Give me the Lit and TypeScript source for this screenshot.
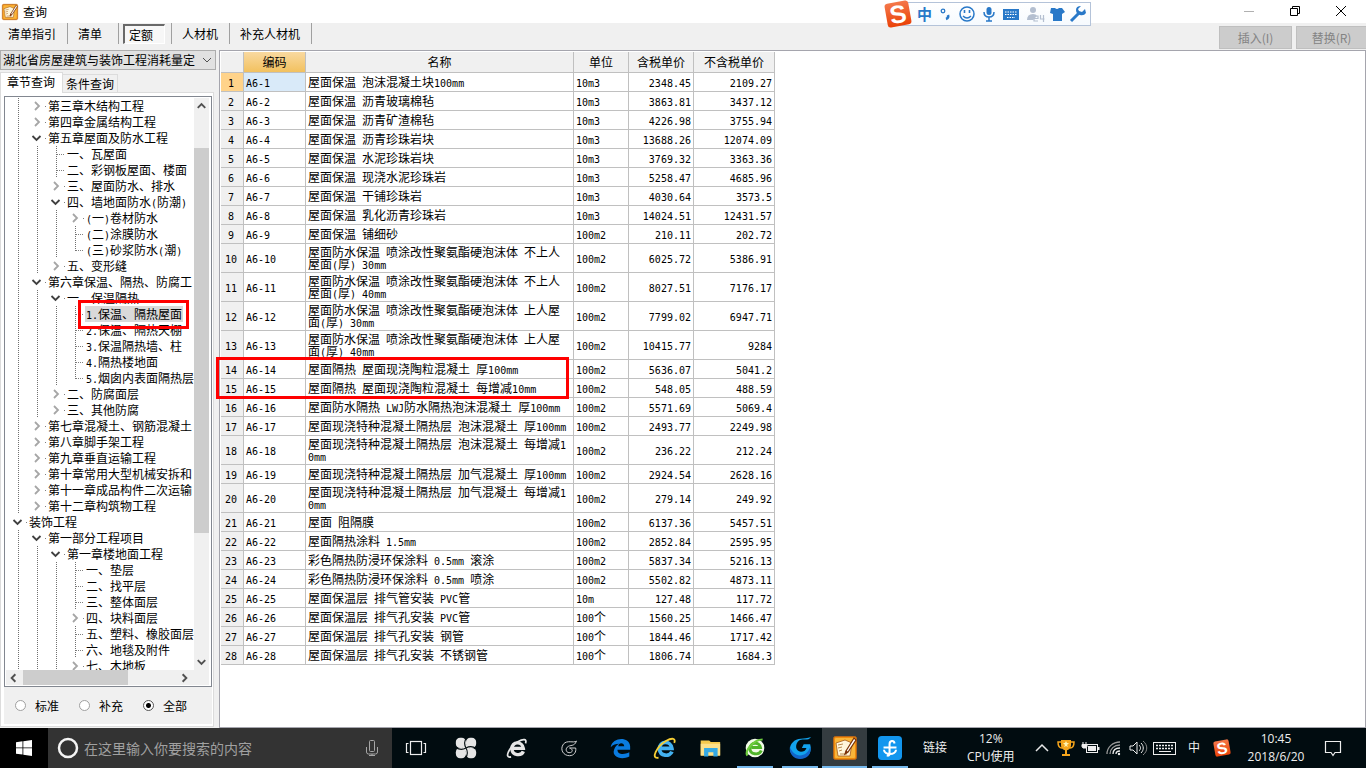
import { LitElement, html, svg, css, nothing } from "lit";
import { customElement, property, state } from "lit/decorators.js";
import { classMap } from "lit/directives/class-map.js";

type Kind = "open" | "closed" | "leaf" | "last";
interface Node { level: number; kind: Kind; text: string; selected?: boolean }

const n = (level: number, kind: Kind, text: string, selected = false): Node => ({ level, kind, text, selected });

const TREE: Node[] = [
  n(1, "closed", "第三章木结构工程"),
  n(1, "closed", "第四章金属结构工程"),
  n(1, "open", "第五章屋面及防水工程"),
  n(2, "leaf", "一、瓦屋面"),
  n(2, "leaf", "二、彩钢板屋面、楼面"),
  n(2, "closed", "三、屋面防水、排水"),
  n(2, "open", "四、墙地面防水(防潮)"),
  n(3, "closed", "(一)卷材防水"),
  n(3, "leaf", "(二)涂膜防水"),
  n(3, "last", "(三)砂浆防水(潮)"),
  n(2, "closed", "五、变形缝"),
  n(1, "open", "第六章保温、隔热、防腐工"),
  n(2, "open", "一、保温隔热"),
  n(3, "leaf", "1.保温、隔热屋面", true),
  n(3, "leaf", "2.保温、隔热天棚"),
  n(3, "leaf", "3.保温隔热墙、柱"),
  n(3, "leaf", "4.隔热楼地面"),
  n(3, "last", "5.烟囱内表面隔热层"),
  n(2, "closed", "二、防腐面层"),
  n(2, "closed", "三、其他防腐"),
  n(1, "closed", "第七章混凝土、钢筋混凝土"),
  n(1, "closed", "第八章脚手架工程"),
  n(1, "closed", "第九章垂直运输工程"),
  n(1, "closed", "第十章常用大型机械安拆和"),
  n(1, "closed", "第十一章成品构件二次运输"),
  n(1, "closed", "第十二章构筑物工程"),
  n(0, "open", "装饰工程"),
  n(1, "open", "第一部分工程项目"),
  n(2, "open", "第一章楼地面工程"),
  n(3, "leaf", "一、垫层"),
  n(3, "leaf", "二、找平层"),
  n(3, "leaf", "三、整体面层"),
  n(3, "closed", "四、块料面层"),
  n(3, "leaf", "五、塑料、橡胶面层"),
  n(3, "leaf", "六、地毯及附件"),
  n(3, "closed", "七、木地板"),
];

const ROWS: [string, string, string, string][] = [
  ["屋面保温 泡沫混凝土块100mm", "10m3", "2348.45", "2109.27"],
  ["屋面保温 沥青玻璃棉毡", "10m3", "3863.81", "3437.12"],
  ["屋面保温 沥青矿渣棉毡", "10m3", "4226.98", "3755.94"],
  ["屋面保温 沥青珍珠岩块", "10m3", "13688.26", "12074.09"],
  ["屋面保温 水泥珍珠岩块", "10m3", "3769.32", "3363.36"],
  ["屋面保温 现浇水泥珍珠岩", "10m3", "5258.47", "4685.96"],
  ["屋面保温 干铺珍珠岩", "10m3", "4030.64", "3573.5"],
  ["屋面保温 乳化沥青珍珠岩", "10m3", "14024.51", "12431.57"],
  ["屋面保温 铺细砂", "100m2", "210.11", "202.72"],
  ["屋面防水保温 喷涂改性聚氨酯硬泡沫体 不上人屋面(厚) 30mm", "100m2", "6025.72", "5386.91"],
  ["屋面防水保温 喷涂改性聚氨酯硬泡沫体 不上人屋面(厚) 40mm", "100m2", "8027.51", "7176.17"],
  ["屋面防水保温 喷涂改性聚氨酯硬泡沫体 上人屋面(厚) 30mm", "100m2", "7799.02", "6947.71"],
  ["屋面防水保温 喷涂改性聚氨酯硬泡沫体 上人屋面(厚) 40mm", "100m2", "10415.77", "9284"],
  ["屋面隔热 屋面现浇陶粒混凝土 厚100mm", "100m2", "5636.07", "5041.2"],
  ["屋面隔热 屋面现浇陶粒混凝土 每增减10mm", "100m2", "548.05", "488.59"],
  ["屋面防水隔热 LWJ防水隔热泡沫混凝土 厚100mm", "100m2", "5571.69", "5069.4"],
  ["屋面现浇特种混凝土隔热层 泡沫混凝土 厚100mm", "100m2", "2493.77", "2249.98"],
  ["屋面现浇特种混凝土隔热层 泡沫混凝土 每增减10mm", "100m2", "236.22", "212.24"],
  ["屋面现浇特种混凝土隔热层 加气混凝土 厚100mm", "100m2", "2924.54", "2628.16"],
  ["屋面现浇特种混凝土隔热层 加气混凝土 每增减10mm", "100m2", "279.14", "249.92"],
  ["屋面 阻隔膜", "100m2", "6137.36", "5457.51"],
  ["屋面隔热涂料 1.5mm", "100m2", "2852.84", "2595.95"],
  ["彩色隔热防浸环保涂料 0.5mm 滚涂", "100m2", "5837.34", "5216.13"],
  ["彩色隔热防浸环保涂料 0.5mm 喷涂", "100m2", "5502.82", "4873.11"],
  ["屋面保温层 排气管安装 PVC管", "10m", "127.48", "117.72"],
  ["屋面保温层 排气孔安装 PVC管", "100个", "1560.25", "1466.47"],
  ["屋面保温层 排气孔安装 钢管", "100个", "1844.46", "1717.42"],
  ["屋面保温层 排气孔安装 不锈钢管", "100个", "1806.74", "1684.3"],
];

/** Half-width runs are set in a monospace face half as wide as the ideographs. */
const mixed = (text: string) =>
  text.split(/([\x20-\x7e]+)/).filter(Boolean).map((run) =>
    /^[\x20-\x7e]/.test(run) ? html`<span class="half">${run}</span>` : run);

const shared = css`
  * { box-sizing: border-box; }
  button, select, input { font: inherit; color: inherit; margin: 0; padding: 0; border: 0; background: none; border-radius: 0; }
  svg { display: block; flex: none; overflow: visible; }
  .half { font-family: "DejaVu Sans Mono", monospace; font-size: 10px; line-height: 0; }
`;

const noteIcon = (size: number) => html`
  <svg width=${size} height=${size} viewBox="0 0 24 24" aria-hidden="true">
    <rect x="0.5" y="0.5" width="23" height="23" rx="2" fill="#f08a0c" stroke="#b5651a"/>
    <rect x="2" y="2" width="20" height="20" rx="1" fill="#f9b53a"/>
    <path d="M3 7l9-3 7 3-2 13-12 0z" fill="#fff6dc" stroke="#a35a1c" stroke-width=".8"/>
    <path d="M5 9l5-1M5 12l4-1M6 15l3-1M7 18l7 0" stroke="#b98a50" stroke-width="1"/>
    <path d="M21 2l-8 13-1 3 3-2 8-12z" fill="#fff" stroke="#7a3408" stroke-width="1.2"/>
    <path d="M13 14l-1 4 3-2z" fill="#7a2c0a"/>
  </svg>`;

const sogou = (size: number) => html`
  <svg width=${size} height=${size} viewBox="0 0 28 28" aria-label="搜狗">
    <defs><linearGradient id="sg" x1="0" y1="0" x2="0" y2="1"><stop offset="0" stop-color="#f4784a"/><stop offset="1" stop-color="#ea4208"/></linearGradient></defs>
    <g transform="rotate(-10 14 14)">
      <rect x="2" y="2" width="24" height="24" rx="3" fill="url(#sg)"/>
      <text x="14" y="23" text-anchor="middle" font-family="Liberation Sans, sans-serif" font-weight="700" font-size="25" fill="#fff">S</text>
    </g>
  </svg>`;

const guide = (kind: Kind | "line") => {
  const stub = kind === "leaf" || kind === "last";
  return html`<svg width="19" height="16" viewBox="0 0 19 16" shape-rendering=${kind === "open" || kind === "closed" ? "auto" : "crispEdges"}>
    ${kind === "line" || stub ? svg`<path d="M9.5 0V${kind === "last" ? 9 : 16}" stroke="#707070" stroke-dasharray="1 1"/>` : nothing}
    ${stub ? svg`<path d="M10 8.5H18" stroke="#808080" stroke-dasharray="1 1"/>` : nothing}
    ${kind === "open" ? svg`<path d="M4.500 6l4 4 4-4" fill="none" stroke="#404040" stroke-width="1.800"/>` : nothing}
    ${kind === "closed" ? svg`<path d="M7 4l4 4-4 4" fill="none" stroke="#a6a6a6" stroke-width="1.800"/>` : nothing}
    ${kind === "open" || kind === "closed" ? svg`<rect x="17" y="8" width="1" height="1" fill="#808080"/>` : nothing}
  </svg>`;
};

const arrow = (dir: "up" | "down" | "left" | "right") => {
  const d = { up: "M4 10l4-4 4 4", down: "M4 6l4 4 4-4", left: "M10 4L6 8l4 4", right: "M6 4l4 4-4 4" }[dir];
  return html`<svg width="15" height="16" viewBox="0 0 16 16"><path d=${d} fill="none" stroke="#505050" stroke-width="2"/></svg>`;
};

@customElement("chapter-tree")
class ChapterTree extends LitElement {
  static styles = [shared, css`
    :host { display: grid; grid-template: minmax(0, 1fr) 15px / minmax(0, 1fr) 15px; padding: 1px 2px 1px 1px; background: #fff; border: 1px solid #828790; overflow: hidden; }
    .view { overflow: hidden; padding-left: 3px; }
    .row { display: flex; height: 16px; line-height: 16px; white-space: nowrap; }
    .label { padding: 0 1px; }
    .selected { background: #d9d9d9; }
    .bar { display: flex; background: #f0f0f0; }
    .vertical { flex-direction: column; }
    .horizontal { padding: 0 2px 0 0; }
    .thumb { background: #cdcdcd; }
    .before { flex: 34; }
    .vertical .thumb { flex: 383; }
    .after { flex: 121; }
    .horizontal .thumb { flex: 105; margin-left: 2px; }
    .rest { flex: 49; }
    .corner { background: #f0f0f0; }
  `];
  render() {
    return html`
      <div class="view" role="tree" aria-label="章节">
        ${TREE.map((node) => html`
          <div class="row" role="treeitem" aria-level=${node.level + 1} aria-selected=${node.selected ? "true" : "false"}>
            ${Array.from({ length: node.level }, () => guide("line"))}${guide(node.kind)}
            <span class=${classMap({ label: true, selected: !!node.selected })}>${mixed(node.text)}</span>
          </div>`)}
      </div>
      <div class="bar vertical">${arrow("up")}<i class="before"></i><i class="thumb"></i><i class="after"></i>${arrow("down")}</div>
      <div class="bar horizontal">${arrow("left")}<i class="thumb"></i><i class="rest"></i>${arrow("right")}</div>
      <div class="corner"></div>`;
  }
}

@customElement("quota-table")
class QuotaTable extends LitElement {
  static styles = [shared, css`
    :host { display: block; }
    table { table-layout: fixed; width: 554px; border-collapse: separate; border-spacing: 0; line-height: 12px; }
    th, td { font-weight: 400; padding: 2px 2px; border: solid #c0c0c0; border-width: 0 1px 1px 0; height: 19px; text-align: left; word-break: break-all; }
    th { background: #f0f0f0; text-align: center; }
    tbody th { padding-right: 4px; }
    thead th { height: 21px; }
    .name { padding-right: 4px; }
    .num { text-align: right; }
    .sorted { background: linear-gradient(#f9d9a0, #f2c15f); }
    .current { background: #ffd38a; }
    .picked { background: #d9eaf9; }
    .c0 { width: 23px; } .c1 { width: 62px; } .c2 { width: 268px; } .c3 { width: 55px; } .c4 { width: 65px; } .c5 { width: 81px; }
  `];
  render() {
    return html`<table>
      <colgroup>${[0, 1, 2, 3, 4, 5].map((i) => html`<col class="c${i}">`)}</colgroup>
      <thead><tr><th></th><th class="sorted" scope="col">编码</th><th scope="col">名称</th><th scope="col">单位</th><th scope="col">含税单价</th><th scope="col">不含税单价</th></tr></thead>
      <tbody>${ROWS.map(([name, unit, taxed, net], i) => html`<tr>
        <th scope="row" class=${classMap({ current: i === 0 })}>${mixed(String(i + 1))}</th>
        <td class=${classMap({ picked: i === 0 })}>${mixed(`A6-${i + 1}`)}</td>
        <td class="name">${mixed(name)}</td><td>${mixed(unit)}</td>
        <td class="num">${mixed(taxed)}</td><td class="num">${mixed(net)}</td></tr>`)}
      </tbody></table>`;
  }
}

const eShape = (color: string, ring: string) => svg`
  <path d="M20.500 17C18.500 22.500 7.500 22.500 7 14 6.500 5 19.500 4.500 20.500 13.500H8" fill="none" stroke=${color} stroke-width="4"/>
  <path d="M6 23.500c-9 2-2-12 8-18 7-4 11-3 9 2" fill="none" stroke=${ring} stroke-width="2"/>`;

const APPS = {
  pinwheel: svg`<g fill="#e6e6e6"><rect x="1" y="1" width="12" height="12" rx="5"/><rect x="13" y="1" width="12" height="12" rx="5"/><rect x="1" y="13" width="12" height="12" rx="5"/><rect x="13" y="13" width="12" height="12" rx="5"/><rect x="9" y="9" width="8" height="8"/></g><path d="M1 12.500q6 4 12 .5t12 .5M13.500 1q-4 6-.5 12t-.5 12" fill="none" stroke="#061013" stroke-width="1.300"/>`,
  e: eShape("#e6e6e6", "#e6e6e6"),
  swirl: svg`<path d="M24 4c-4 3-12-2-17 4-5 7 0 15 8 15 6 0 9-5 8-10h-8c4 1 5 5 1 6-5 1-7-4-4-7 4-4 9 0 12-8z" fill="none" stroke="#d0d0d0" stroke-width="1.300"/>`,
  edge: svg`<path d="M2 12C4 0 24-1 25 11v4H10c0 6 8 6 14 3v5C14 28 3 23 6 15c1-4 4-6 6-7-4 0-7 1-10 4zm9-1h7c0-5-7-5-7 0z" fill="#0a7be0"/>`,
  ie: eShape("#43b2f1", "#f7cf35"),
  folder: svg`<path d="M2 4h10l2 2h11v16H2z" fill="#f6c94e"/><path d="M2 8h23v14H2z" fill="#fde08a"/><path d="M6 13h16v10h-5v-5h-6v5H6z" fill="#35a9e4"/>`,
  green: svg`<circle cx="13" cy="13" r="11" fill="#f2fbe8"/><path d="M20.500 16C18 22 7 21 7 13.500 7 6 18.500 5 19.500 12.500H9" fill="none" stroke="#50b52a" stroke-width="3.500"/><path d="M4 22c-4-6 8-19 18-19" fill="none" stroke="#6fce3f" stroke-width="2.500"/>`,
  blue: svg`<path d="M25 1c-3 5-9 1-13 4-5 4-4 12 2 12 3 0 5-1 6-4h-5l2-4h7c3 10-4 16-12 15C3 23-1 13 5 7c5-6 12-3 20-6z" fill="#12a2ed"/><path d="M2 12c-1 8 5 13 11 13 8 0 13-6 11-13-2 6-6 9-11 9-5 0-9-4-11-9z" fill="#1264ca"/>`,
  harbor: svg`<rect x="0" y="0" width="26" height="26" rx="4" fill="#1296ee"/><path d="M18 8C17 4 12.500 5 12.500 9v10q0 3-3 2M6 12.500h14M6.500 15c0 6 13 6 13 0" fill="none" stroke="#fff" stroke-width="2.200"/>`,
};

const TRAY = {
  up: svg`<path d="M6 15l6-6 6 6" fill="none" stroke="#e8e8e8" stroke-width="1.500"/>`,
  cup: svg`<path d="M7 4h10v5c0 7-10 7-10 0zM11 14h2v4h-2zM8 18h8v2H8z" fill="#f6a51c"/><path d="M7 6H4c0 5 2 6 4 6M17 6h3c0 5-2 6-4 6" fill="none" stroke="#f6a51c" stroke-width="1.500"/><path d="M12 5l1 2h2l-2 2 1 2-2-1-2 1 1-2-2-2h2z" fill="#fff3b0"/>`,
  power: svg`<rect x="8.500" y="8.500" width="11" height="8" fill="none" stroke="#eee"/><rect x="10" y="10" width="8" height="5" fill="#eee"/><rect x="20" y="11" width="1.500" height="3" fill="#eee"/><path d="M5 6v2M8 6v2M4 8.500h5v2l-1 1.500H5l-1-1.500z" fill="#eee" stroke="#eee"/>`,
  wifi: svg`<g fill="none" stroke="#9a9a9a" stroke-width="1.300"><path d="M5 18C5 11 11 6 18 6M8 18c0-5 4-9 10-9"/><path d="M11 18c0-4 3-6 7-6M14 18c0-2 2-3 4-3" stroke="#eee"/></g><circle cx="17" cy="18" r="1.200" fill="#eee"/>`,
  sound: svg`<path d="M4 10h3l4-4v12l-4-4H4z" fill="none" stroke="#eee"/><path d="M13 9c2 2 2 4 0 6M15 7c3 3 3 7 0 10" fill="none" stroke="#eee"/><path d="M17 5c5 4 5 10 0 14" fill="none" stroke="#888"/>`,
  keys: svg`<rect x=".5" y="6.500" width="22" height="12" fill="none" stroke="#eee"/><path d="M3 9.500h18M3 12.500h18" stroke="#eee" stroke-width="1.500" stroke-dasharray="2 1"/><path d="M6 15.500h12" stroke="#eee"/>`,
};

@customElement("task-bar")
class TaskBar extends LitElement {
  static styles = [shared, css`
    :host { display: flex; height: 40px; flex: none; background: #010c10; color: #eee; font: 12px/18px "Open Sans", "Noto Sans CJK SC", sans-serif; }
    button { display: grid; place-items: center; height: 40px; }
    .start { width: 48px; background: #000; }
    .search { display: flex; align-items: center; width: 344px; padding: 0 12px 0 9px; gap: 5px; background: #333; }
    input { flex: 1; min-width: 0; outline: 0; font: 14px/20px "Noto Sans CJK SC", sans-serif; }
    input::placeholder { color: #a0a0a0; opacity: 1; }
    .view { width: 48px; }
    .pinned, .apps { display: flex; }
    .pinned button { width: 51px; }
    .apps { padding-left: 4px; }
    .apps button { width: 45px; }
    .apps .running { background: linear-gradient(#76b9ed, #76b9ed) bottom / 36px 2px no-repeat; }
    .apps .active { background: linear-gradient(#76b9ed, #76b9ed) bottom / 100% 2px no-repeat #343c40; }
    .links { padding-left: 11px; align-self: center; }
    .cpu { padding-left: 20px; text-align: center; align-self: center; }
    .tray { display: flex; margin-left: auto; align-items: center; padding-right: 16px; }
    .tray button { width: 24px; }
    .tray .wide { width: 30px; }
    .tray .mid { width: 28px; }
    .clock { width: 80px; text-align: center; }
    .tray .notes { width: 34px; }
  `];
  private tray(label: string, shape: unknown, cls = "") {
    return html`<button class=${cls} aria-label=${label}><svg width="24" height="24" viewBox="0 0 24 24">${shape}</svg></button>`;
  }
  private app(label: string, shape: unknown, cls = "", size = 22) {
    return html`<button class=${cls} aria-label=${label}><svg width=${size} height=${size} viewBox="0 0 26 26">${shape}</svg></button>`;
  }
  render() {
    return html`
      <button class="start" aria-label="开始"><svg width="16" height="16" viewBox="0 0 16 16" fill="#fff"><path d="M0 2.300L6.500 1.300V7.500H0zM7.300 1.200L16 0V7.500H7.300zM0 8.300H6.500V14.600L0 13.700zM7.300 8.300H16V16L7.300 14.800z"/></svg></button>
      <label class="search">
        <svg width="22" height="22" viewBox="0 0 22 22"><circle cx="11" cy="11" r="9" fill="none" stroke="#f4f4f4" stroke-width="2.500"/></svg>
        <input type="text" aria-label="搜索" placeholder="在这里输入你要搜索的内容">
        <svg width="16" height="18" viewBox="0 0 16 18" fill="none" stroke="#a6a6a6"><rect x="5.500" y="1.500" width="5" height="11" rx="1"/><path d="M2.500 8v5q0 2 2 2h7q2 0 2-2V8M8 15v2M5 16.500h6"/></svg>
      </label>
      <button class="view" aria-label="任务视图"><svg width="22" height="16" viewBox="0 0 22 16" fill="none" stroke="#eee" stroke-width="1.200"><rect x="5.500" y="1.500" width="11" height="13"/><path d="M3.500 3.500h-2v9h2M18.500 3.500h2v9h-2"/></svg></button>
      <div class="pinned">${this.app("浏览助手", APPS.pinwheel)}${this.app("浏览器", APPS.e)}${this.app("广联达", APPS.swirl, "", 20)}</div>
      <div class="apps">
        ${this.app("Edge", APPS.edge)}${this.app("Internet Explorer", APPS.ie, "", 24)}${this.app("文件资源管理器", APPS.folder)}
        ${this.app("安全浏览器", APPS.green, "running")}${this.app("广联达", APPS.blue, "running", 24)}
        <button class="running active" aria-label="查询">${noteIcon(24)}</button>
        ${this.app("驻场", APPS.harbor, "running", 24)}
      </div>
      <span class="links">链接</span>
      <span class="cpu">12%<br>CPU使用</span>
      <div class="tray">
        ${this.tray("更多", TRAY.up)}${this.tray("奖杯", TRAY.cup)}${this.tray("电源", TRAY.power)}${this.tray("网络", TRAY.wifi)}${this.tray("音量", TRAY.sound)}${this.tray("键盘", TRAY.keys, "wide")}
        <button class="mid">中</button><button class="mid" aria-label="输入法">${sogou(18)}</button>
        <time class="clock">10:45<br>2018/6/20</time>
        <button class="notes" aria-label="通知"><svg width="18" height="18" viewBox="0 0 18 18"><path d="M1.500 2.500h15v11H11l-2 3-2-3H1.500z" fill="none" stroke="#eee" stroke-width="1.200"/></svg></button>
      </div>`;
  }
}

@customElement("app-root")
class AppRoot extends LitElement {
  static styles = [shared, css`
    :host { display: flex; flex-direction: column; height: 100vh; position: relative; overflow: hidden; background: #f0f0f0; color: #000; font: 12px/16px "Noto Sans CJK SC", sans-serif; }
    .title { display: flex; align-items: center; height: 23px; flex: none; padding: 0 2px; background: #fff; }
    .title h1 { flex: 1; margin: 0 0 0 5px; font-size: 12px; font-weight: 400; }
    .control { display: grid; place-items: center; width: 46px; height: 21px; margin-bottom: 2px; }
    .tools { display: flex; height: 27px; flex: none; }
    .tool { padding: 0 11px 0 10px; border-right: 1px solid #a0a0a0; height: 21px; }
    .tool:first-child { padding-left: 8px; }
    .tool.second { padding-right: 16px; }
    .holder { padding: 1px 6px 0 4px; border-right: 1px solid #a0a0a0; height: 21px; }
    .pressed { width: 42px; height: 20px; padding: 0 0 0 4px; text-align: left; background: #f7f7f7; border: solid; border-width: 2px 1px 1px 2px; border-color: #696969 #fff #fff #696969; }
    .actions { display: flex; gap: 4px; margin: 3px 0 0 auto; }
    .actions button { width: 73px; height: 23px; background: #ccc; border: 1px solid #bfbfbf; color: #838383; }
    .actions button:last-child { width: 70px; border-right: 0; }
    .body { display: flex; flex: 1; min-height: 0; gap: 3px; }
    aside { display: flex; flex-direction: column; width: 216px; flex: none; }
    .combo { display: grid; grid-template: 20px / 1fr; align-items: center; }
    .combo > * { grid-area: 1 / 1; }
    .combo select { appearance: none; height: 20px; width: 100%; padding: 0 18px 0 2px; background: #e1e1e1; border: 1px solid #adadad; }
    .combo svg { justify-self: end; margin-right: 4px; pointer-events: none; }
    .tabs { display: flex; align-items: flex-end; margin-top: 2px; }
    .tab { height: 18px; padding: 0 3px; border: 1px solid #dcdcdc; border-width: 1px 1px 0 0; }
    .tab.on { height: 21px; padding: 0 7px 2px 6px; margin-bottom: -1px; background: #fff; border-left-width: 1px; z-index: 1; }
    .page { display: flex; flex-direction: column; flex: 1; min-height: 0; width: 214px; margin-bottom: 1px; padding: 3px 1px 2px 3px; background: #fff; border: 1px solid #dcdcdc; }
    chapter-tree { flex: 1; min-height: 0; }
    .scope { display: flex; align-items: center; height: 37px; margin: 0; padding: 0 0 0 11px; background: #f0f0f0; }
    .scope label { display: flex; align-items: center; gap: 9px; width: 64px; }
    .scope input { appearance: none; width: 11px; height: 11px; border: 1px solid #a0a0a0; border-radius: 50%; background: #fff; }
    .scope input:checked { border-color: #555; background: radial-gradient(circle, #000 0 2px, #fff 3px); }
    main { flex: 1; min-width: 0; padding: 1px; background: #fff; border: 1px solid #a5a5ad; overflow: hidden; }
    .mark { position: absolute; border: 3px solid #f00; pointer-events: none; }
    .mark.item { left: 78px; top: 300px; width: 111px; height: 29px; }
    .mark.rows { left: 216px; top: 357px; width: 353px; height: 42px; }
    .ime { position: absolute; left: 884px; top: 0; display: flex; align-items: center; height: 28px; }
    .ime .strip { display: flex; align-items: center; gap: 2px; height: 24px; margin-left: -15px; padding: 0 0 0 19px; width: 194px; border: 1px solid #b4c3d9; background: linear-gradient(#fff, #f6fafe); color: #2878c8; order: 1; }
    .ime > svg { order: 0; z-index: 1; }
    .ime b { width: 16px; font-size: 15px; font-weight: 700; line-height: 20px; }
  `];
  @property({ type: String }) heading = "查询";
  @state() private scope = "全部";
  render() {
    return html`
      <header class="title">${noteIcon(16)}<h1>${this.heading}</h1>
        <button class="control" aria-label="最小化"><svg width="10" height="10" viewBox="0 0 10 10"><path d="M0 5.500h10" stroke="#b0b0b0"/></svg></button>
        <button class="control" aria-label="还原"><svg width="10" height="10" viewBox="0 0 10 10"><path d="M.5 2.500h7v7h-7zM2.500 2.500v-2h7v7h-2" fill="none" stroke="#000"/></svg></button>
        <button class="control" aria-label="关闭"><svg width="10" height="10" viewBox="0 0 10 10"><path d="M0 0l10 10M10 0L0 10" stroke="#000"/></svg></button>
      </header>
      <nav class="tools">
        <button class="tool">清单指引</button><button class="tool second">清单</button>
        <span class="holder"><button class="pressed" aria-pressed="true">定额</button></span>
        <button class="tool">人材机</button><button class="tool">补充人材机</button>
        <div class="actions"><button disabled>插入(I)</button><button disabled>替换(R)</button></div>
      </nav>
      <div class="body">
        <aside>
          <div class="combo">
            <select aria-label="定额库"><option>湖北省房屋建筑与装饰工程消耗量定</option></select>
            <svg width="10" height="6" viewBox="0 0 10 6"><path d="M1 1l4 4 4-4" fill="none" stroke="#505050"/></svg>
          </div>
          <div class="tabs" role="tablist"><button class="tab on" role="tab" aria-selected="true">章节查询</button><button class="tab" role="tab" aria-selected="false">条件查询</button></div>
          <div class="page">
            <chapter-tree></chapter-tree>
            <div class="scope" role="radiogroup" aria-label="范围">
              ${["标准", "补充", "全部"].map((s) => html`<label><input type="radio" name="scope" .checked=${this.scope === s} @change=${() => (this.scope = s)}>${s}</label>`)}
            </div>
          </div>
        </aside>
        <main><quota-table></quota-table></main>
      </div>
      <task-bar></task-bar>
      <div class="mark item"></div><div class="mark rows"></div>
      <div class="ime">${sogou(28)}
        <div class="strip"><b>中</b>
          <svg width="156" height="20" viewBox="0 0 156 20" fill="none" stroke="#2878c8" stroke-width="2">
            <circle cx="9" cy="7" r="1.800" stroke-width="1.300"/><path d="M14 11q1 3-2 4" stroke-width="2.500"/>
            <circle cx="33" cy="10" r="7" stroke-width="1.500"/><path d="M29 12q4 4 8 0" stroke-width="1.300"/><path d="M30.500 6v3M35.500 6v3" stroke-width="1.600"/>
            <rect x="52.500" y="3" width="5" height="8" rx="2.500" fill="#2878c8" stroke="none"/><path d="M50 8q0 5 5 5t5-5M55 13v4M52 17h6" stroke-width="1.500"/>
            <rect x="69" y="5" width="16" height="11" fill="#2878c8" stroke="none"/><path d="M71 8h12M71 10.500h12M73 13.500h8" stroke="#fff" stroke-width="1.200" stroke-dasharray="1.500 1"/>
            <g stroke="#b4bfd0"><circle cx="99" cy="6" r="3" fill="#b4bfd0" stroke="none"/><path d="M93 16q0-6 6-6 3 0 4 2l-4 4z" fill="#b4bfd0" stroke="none"/><path d="M100 12h4v2.500h-4v2.500h4M106.500 11v4h4M109.500 11v7" stroke-width="1.200"/></g>
            <path d="M117 4h4q2 2 4 0h3l3 4-3 2v7h-9v-7l-3-1z" fill="#2878c8" stroke="none"/>
            <path d="M137 17l8-8" stroke-width="3"/><path d="M151 5l-3 3-3-1-1-2 3-3q-5 0-5 4t4 5 6-2z" fill="#2878c8" stroke="none"/>
          </svg>
        </div>
      </div>`;
  }
}
